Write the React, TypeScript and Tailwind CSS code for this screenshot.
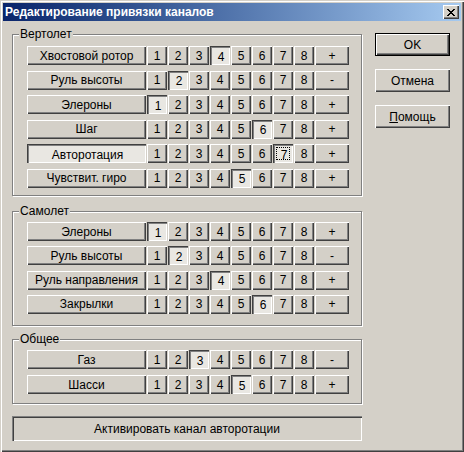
import React from 'react';

type Row = { name: string; ch: number; sign: string; active?: boolean; focus?: boolean };

const RAISED = 'bg-[#d4d0c8] shadow-[inset_1px_1px_0_#ffffff,inset_-1px_-1px_0_#404040,inset_-2px_-2px_0_#808080]';
const PRESSED = 'bg-[#e9e7e2] shadow-[inset_1px_1px_0_#404040,inset_2px_2px_0_#808080,inset_-1px_-1px_0_#ffffff]';

const HELI: Row[] = [
  { name: 'Хвостовой ротор', ch: 4, sign: '+' },
  { name: 'Руль высоты', ch: 2, sign: '-' },
  { name: 'Элероны', ch: 1, sign: '+' },
  { name: 'Шаг', ch: 6, sign: '+' },
  { name: 'Авторотация', ch: 7, sign: '+', active: true, focus: true },
  { name: 'Чувствит. гиро', ch: 5, sign: '+' },
];

const PLANE: Row[] = [
  { name: 'Элероны', ch: 1, sign: '+' },
  { name: 'Руль высоты', ch: 2, sign: '-' },
  { name: 'Руль направления', ch: 4, sign: '+' },
  { name: 'Закрылки', ch: 6, sign: '+' },
];

const COMMON: Row[] = [
  { name: 'Газ', ch: 3, sign: '-' },
  { name: 'Шасси', ch: 5, sign: '+' },
];

function Btn({ label, pressed, focus, className = '' }: { label: string; pressed?: boolean; focus?: boolean; className?: string }) {
  return (
    <div className={`relative flex items-center justify-center h-full ${pressed ? PRESSED : RAISED} ${className}`}>
      <span className={pressed ? 'translate-x-[1px] translate-y-[1px]' : ''}>{label}</span>
      {focus && <span className="absolute inset-[3px] border border-dotted border-black" />}
    </div>
  );
}

function ChannelRow({ row }: { row: Row }) {
  return (
    <div className="flex gap-[1px] h-[19px]">
      <Btn label={row.name} pressed={row.active} className="w-[119px]" />
      {[1, 2, 3, 4, 5, 6, 7, 8].map(n => (
        <Btn key={n} label={String(n)} pressed={row.ch === n} focus={row.focus && row.ch === n} className="w-[20px]" />
      ))}
      <Btn label={row.sign} className="w-[34px]" />
    </div>
  );
}

function Group({ title, rows, className, gap }: { title: string; rows: Row[]; className: string; gap: string }) {
  return (
    <div className={`relative border border-[#808080] shadow-[inset_1px_1px_0_#ffffff,1px_1px_0_#ffffff] pl-[14px] ${className}`}>
      <span className="absolute left-[6px] top-[-8px] px-[1px] leading-[14px] bg-[#d4d0c8]">{title}</span>
      <div className={`flex flex-col ${gap}`}>
        {rows.map(r => (
          <ChannelRow key={r.name} row={r} />
        ))}
      </div>
    </div>
  );
}

function SideButton({ children, isDefault }: { children: React.ReactNode; isDefault?: boolean }) {
  return (
    <div
      className={`w-[75px] h-[23px] flex items-center justify-center ${
        isDefault
          ? 'border border-black bg-[#d4d0c8] shadow-[inset_1px_1px_0_#ffffff,inset_-1px_-1px_0_#404040,inset_-2px_-2px_0_#808080]'
          : RAISED
      }`}
    >
      {children}
    </div>
  );
}

export default function App() {
  return (
    <div className="w-[464px] h-[452px] bg-[#d4d0c8] flex flex-col text-[12px] text-black font-['Liberation_Sans',Arial,sans-serif] shadow-[inset_1px_1px_0_#d4d0c8,inset_2px_2px_0_#ffffff,inset_-1px_-1px_0_#404040,inset_-2px_-2px_0_#808080]">
      <div className="mx-[3px] mt-[3px] h-[18px] flex items-center justify-between bg-gradient-to-r from-[#0a246a] to-[#a6caf0]">
        <span className="pl-[2px] font-bold text-white">Редактирование привязки каналов</span>
        <div className={`mr-[2px] w-[16px] h-[14px] flex items-center justify-center ${RAISED}`}>
          <svg width="8" height="7" viewBox="0 0 8 7" shapeRendering="crispEdges">
            <path d="M0 0h2v1h-2zM6 0h2v1h-2zM1 1h2v1h-2zM5 1h2v1h-2zM2 2h4v1h-4zM3 3h2v1h-2zM2 4h4v1h-4zM1 5h2v1h-2zM5 5h2v1h-2zM0 6h2v1h-2zM6 6h2v1h-2z" fill="#000" />
          </svg>
        </div>
      </div>

      <div className="flex pl-[12px] pt-[12px]">
        <div className="w-[350px] pt-[1px] flex flex-col">
          <Group title="Вертолет" rows={HELI} className="h-[162px] pt-[11px]" gap="gap-[5.5px]" />
          <Group title="Самолет" rows={PLANE} className="mt-[15px] h-[115px] pt-[10px]" gap="gap-[5.33px]" />
          <Group title="Общее" rows={COMMON} className="mt-[13px] h-[65px] pt-[10px]" gap="gap-[6px]" />
          <div className="mt-[12px] h-[25px] flex items-center justify-center shadow-[inset_1px_1px_0_#808080,inset_2px_2px_0_#404040,inset_-1px_-1px_0_#ffffff,inset_-2px_-2px_0_#d4d0c8]">
            Активировать канал авторотации
          </div>
        </div>

        <div className="ml-[13px] flex flex-col gap-[13px]">
          <SideButton isDefault>OK</SideButton>
          <SideButton>Отмена</SideButton>
          <SideButton>
            <span>
              <span className="underline">П</span>омощь
            </span>
          </SideButton>
        </div>
      </div>
    </div>
  );
}
